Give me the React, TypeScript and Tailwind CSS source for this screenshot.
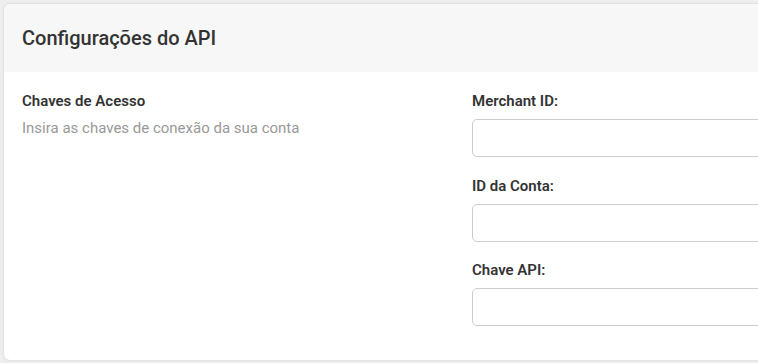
import React from "react";

const fields = ["Merchant ID:", "ID da Conta:", "Chave API:"];

export default function App() {
  return (
    <div
      className="min-h-screen w-full overflow-hidden bg-[#eeeeee] pl-1 pt-1"
      style={{ fontFamily: "Roboto, 'Noto Sans', sans-serif" }}
    >
      <div className="w-[820px] overflow-hidden rounded-md bg-white shadow-[0_0_3px_rgba(0,0,0,0.12)]">
        <div className="flex h-[68px] items-center bg-[#f7f7f7] px-[18px]">
          <h1 className="text-[20px] font-medium text-[#333]">Configurações do API</h1>
        </div>

        <div className="flex px-[18px] pb-[15px] pt-[19px]">
          <div className="w-[450px] shrink-0">
            <h2 className="text-[15px] font-semibold leading-5 text-[#333]">Chaves de Acesso</h2>
            <p className="mt-[7px] text-[15px] leading-5 text-[#999]">
              Insira as chaves de conexão da sua conta
            </p>
          </div>

          <div className="flex-1">
            {fields.map((f) => (
              <div key={f} className="mb-[18.5px]">
                <label className="mb-2 block text-[15px] font-semibold leading-5 text-[#333]">{f}</label>
                <input
                  type="text"
                  className="block h-[38px] w-full rounded-[5px] border border-[#cccccc] bg-white px-3 text-sm outline-none"
                />
              </div>
            ))}
          </div>
        </div>
      </div>
    </div>
  );
}
